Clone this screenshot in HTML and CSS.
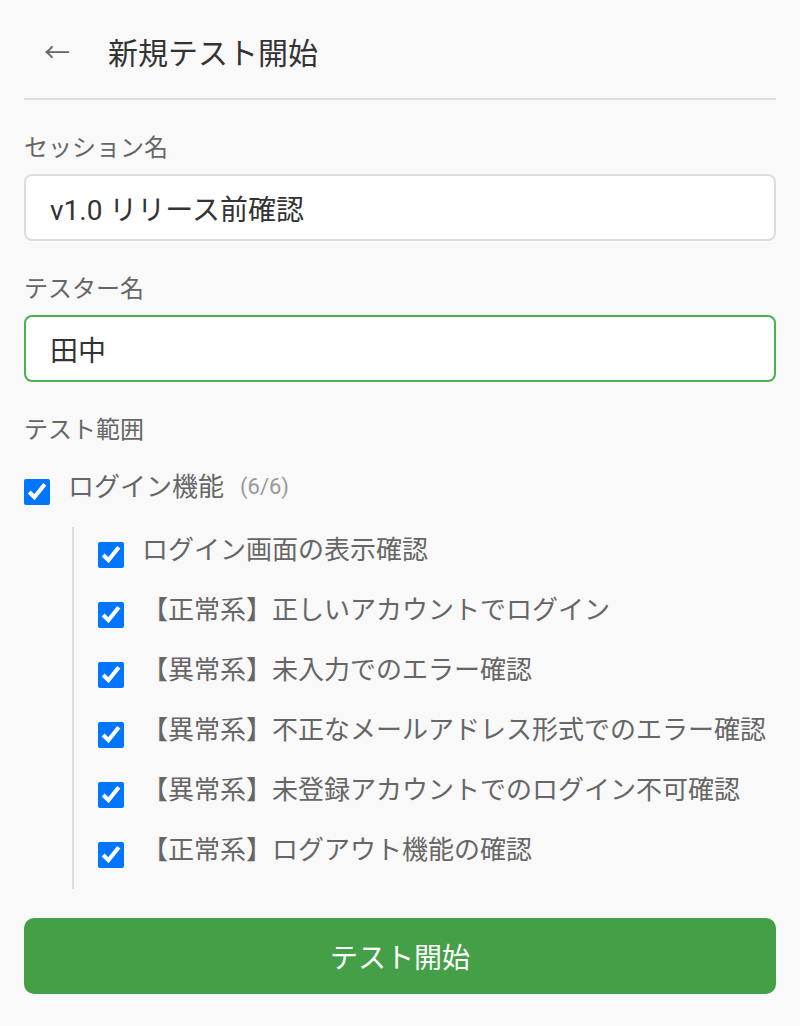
FILE: index.html
```html
<!DOCTYPE html>
<html lang="ja">
<head>
<title>新規テスト開始</title>
<meta charset="UTF-8">
<meta name="viewport" content="width=device-width, initial-scale=1">
<link rel="stylesheet" href="styles.css">
</head>
<body>

<!-- Header -->
<div class="header">
  <button class="back">←</button>
  <h1>新規テスト開始</h1>
</div>

<div class="field">
  <label for="session">セッション名</label>
  <input type="text" id="session" class="text-input" value="v1.0 リリース前確認">
</div>

<div class="field">
  <label for="tester">テスター名</label>
  <input type="text" id="tester" class="text-input active" value="田中">
</div>

<div class="field">
  <label>テスト範囲</label>

  <div class="check-row group">
    <input type="checkbox" id="g1" checked>
    <label for="g1">ログイン機能</label>
    <span class="count">(6/6)</span>
  </div>

  <div class="children">
    <div class="check-row">
      <input type="checkbox" id="c1" checked>
      <label for="c1">ログイン画面の表示確認</label>
    </div>
    <div class="check-row">
      <input type="checkbox" id="c2" checked>
      <label for="c2">【正常系】正しいアカウントでログイン</label>
    </div>
    <div class="check-row">
      <input type="checkbox" id="c3" checked>
      <label for="c3">【異常系】未入力でのエラー確認</label>
    </div>
    <div class="check-row">
      <input type="checkbox" id="c4" checked>
      <label for="c4">【異常系】不正なメールアドレス形式でのエラー確認</label>
    </div>
    <div class="check-row">
      <input type="checkbox" id="c5" checked>
      <label for="c5">【異常系】未登録アカウントでのログイン不可確認</label>
    </div>
    <div class="check-row">
      <input type="checkbox" id="c6" checked>
      <label for="c6">【正常系】ログアウト機能の確認</label>
    </div>
  </div>
</div>

<button class="start">テスト開始</button>

</body>
</html>
```

FILE: styles.css
```css
* {
  box-sizing: border-box;
}

body {
  font-family: Roboto, "Noto Sans CJK JP", sans-serif;
  background: #f9f9f9;
  color: #333;
  margin: 0;
  padding: 0 24px;
}

/* Header */
.header {
  display: flex;
  align-items: center;
  height: 100px;
  padding-top: 4px;
  border-bottom: 2px solid #ddd;
}

.back {
  background: none;
  border: none;
  font-family: "Noto Sans CJK JP", sans-serif;
  font-size: 26px;
  color: #666;
  padding: 0 20px;
  margin-right: 18px;
  line-height: 1;
}

.header h1 {
  font-family: "Noto Sans CJK JP", sans-serif;
  font-size: 30px;
  font-weight: normal;
  margin: 0;
}

/* Form fields */
.field {
  margin-top: 30px;
}

.field > label {
  display: block;
  font-size: 24px;
  line-height: 36px;
  color: #666;
  margin-bottom: 8px;
}

.text-input {
  display: block;
  width: 100%;
  height: 67px;
  padding: 0 24px;
  font-family: Roboto, "Noto Sans CJK JP", sans-serif;
  font-size: 28px;
  color: #333;
  background: white;
  border: 2px solid #ddd;
  border-radius: 8px;
  outline: none;
}

.text-input.active {
  border-color: #4caf50;
}

/* Checkbox tree */
.check-row {
  display: flex;
  align-items: flex-start;
}

.check-row input {
  width: 26px;
  height: 26px;
  margin: 10px 18px 0 0;
  flex-shrink: 0;
}

.check-row label {
  font-size: 26px;
  line-height: 36px;
  color: #666;
}

.group {
  margin-top: 21px;
}

.count {
  font-size: 22px;
  line-height: 36px;
  color: #999;
  margin-left: 16px;
}

.children {
  display: flex;
  flex-direction: column;
  gap: 24px;
  margin: 22px 0 0 48px;
  padding: 5px 0 21px 24px;
  border-left: 2px solid #ddd;
}

.children label {
  white-space: nowrap;
}

/* Start button */
.start {
  display: block;
  width: 100%;
  height: 76px;
  margin-top: 29px;
  background: #43a047;
  color: white;
  border: none;
  border-radius: 10px;
  font-family: "Noto Sans CJK JP", sans-serif;
  font-size: 28px;
}
```
